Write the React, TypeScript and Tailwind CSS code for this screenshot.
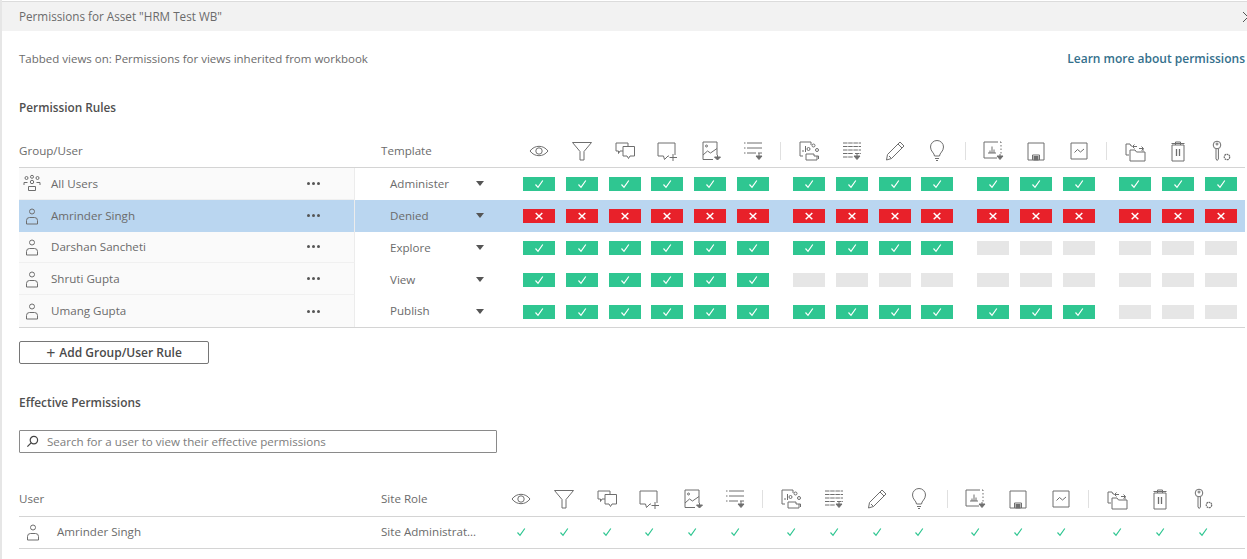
import React from "react";

const S = ({ children }: { children: React.ReactNode }) => (
  <svg viewBox="0 0 24 24" className="w-[24px] h-[24px] shrink-0" fill="none" stroke="#6e6e6e" strokeWidth="1">
    {children}
  </svg>
);

const icons: React.ReactNode[] = [
  <S key="eye"><path d="M3 12c2.500-3.200 5.600-4.700 9-4.700s6.500 1.500 9 4.700c-2.500 3.200-5.600 4.700-9 4.700S5.500 15.200 3 12z" /><circle cx="12" cy="12" r="3.200" /></S>,
  <S key="funnel"><path d="M2.500 3.500h19l-7.500 9v8.500h-4v-8.500z" /></S>,
  <S key="chat"><path d="M3 4h12v3M10 12H7l-1.500 2.500V12H3V4" /><path d="M10 7.500h11.500v9.500H17l-1.500 2.500-1.500-2.500h-4z" /></S>,
  <S key="chatplus"><path d="M3 4h17v12M14 17h-1l-3.500 3.500-1-3.500H3V4" /><path d="M18 15v7M14.500 18.500h7.500" /></S>,
  <S key="img"><path d="M15 20.500H5V3h14v13" /><path d="M5 16l4.500-4 3 2 6.500-4.500" /><circle cx="8.500" cy="7" r="1" /><path d="M19.500 16v2" /><path d="M16.500 18h6l-3 3z" fill="#6e6e6e" /></S>,
  <S key="list"><path d="M3 4h1.500M6 4h15M3 9h1.500M6 9h15M3 14h1.500M6 14h9M17 14h4" /><path d="M18 14v3" /><path d="M15 17h6l-3 3.500z" fill="#6e6e6e" /></S>,
  <S key="people"><path d="M14 3H3v14h3" /><path d="M14 3v3M6 13v-2M8.500 13V7" /><circle cx="11.500" cy="10" r="1.500" /><circle cx="16.500" cy="6.500" r="1.500" /><circle cx="20" cy="11" r="1.500" /><path d="M9 15h8v2h4.500v3M9 15v6h11v-4" /></S>,
  <S key="table"><path d="M3 4h18M3 7.500h18M3 11h18M3 14.500h10M15 14.500h6M3 18h10" strokeDasharray="4.500 .7" /><path d="M17 14v3" /><path d="M14 17h6l-3 3.500z" fill="#6e6e6e" /></S>,
  <S key="pencil"><path d="M4.500 15.500L17 3l4 4L8.500 19.500l-5 1.500zM15 5l4 4M6 17l2.500 2.500" /></S>,
  <S key="bulb"><path d="M9.500 17c0-3-4-4.500-4-9a6.500 6.500 0 0 1 13 0c0 4.500-4 6-4 9z" /><path d="M10 19.500h4M11 21.500h2" /></S>,
  <S key="chartdoc"><path d="M16 19H3V3h14M19 3h1v1M20 6v1.500M20 9.500v1.500M20 13v1.500" /><path d="M7 14h8M9 14v-2.500M11 14V7.500M13 14v-3.500" /><path d="M19 15v2" /><path d="M16 17h6l-3 3.500z" fill="#6e6e6e" /></S>,
  <S key="save"><path d="M4 4h16v17H4z" /><path d="M8.500 21v-5h7v5" /><rect x="10" y="17.500" width="4" height="3.500" fill="#6e6e6e" /></S>,
  <S key="line"><path d="M4 4h16v16H4z" /><path d="M7.500 13.500l3-3 3 2.500 3.500-3" /></S>,
  <S key="folders"><path d="M3 16V5h4l1 2h1M3 16h3" /><path d="M7 11h5l1.500 2H22v9H7z" /><path d="M10 7.500h4M11.500 5.500l-2 2 2 2M16 9.500h4v3M18.500 7.500l2 2-2 2" /></S>,
  <S key="trash"><path d="M6 6h12v16H6zM9.500 6V3h5v3M5.500 4.500h13" /><path d="M10.500 10v7M13.500 10v7" strokeWidth="1.300" /></S>,
  <S key="key"><circle cx="8" cy="6" r="3.800" /><path d="M7 9.800V20l1.200 1.500L9.400 20V9.800" /><circle cx="8" cy="5" r="1" /><circle cx="18" cy="18" r="2.700" strokeDasharray="1.800 .6" strokeWidth="1.300" /></S>,
];

const groups = [
  [0, 1, 2, 3, 4, 5],
  [6, 7, 8, 9],
  [10, 11, 12],
  [13, 14, 15],
];

const Check = ({ color = "#fff" }: { color?: string }) => (
  <svg viewBox="0 0 12 12" className="w-[12px] h-[12px]" fill="none" stroke={color} strokeWidth="1.200">
    <path d="M2.500 6.500l2.500 2.800L9.800 2.500" />
  </svg>
);

const Cross = () => (
  <svg viewBox="0 0 12 12" className="w-[12px] h-[12px]" fill="none" stroke="#fff" strokeWidth="1.500">
    <path d="M2.700 3l6.600 6.200M9.300 3L2.700 9.200" />
  </svg>
);

const Cell = ({ v }: { v: "y" | "n" | "e" }) => (
  <div
    className={`w-[32px] h-[14px] mt-[1px] flex items-center justify-center ${
      v === "y" ? "bg-[#2fc691]" : v === "n" ? "bg-[#e8212a]" : "bg-[#e6e6e6]"
    }`}
  >
    {v === "y" && <Check />}
    {v === "n" && <Cross />}
  </div>
);

const Grid = ({ render, seps }: { render: (i: number) => React.ReactNode; seps?: boolean }) => (
  <div className="flex items-center">
    {groups.map((g, gi) => (
      <React.Fragment key={gi}>
        {gi > 0 &&
          (seps ? (
            <div className="w-[24px] flex justify-center">
              <div className="w-px h-[18px] bg-[#e0e0e0]" />
            </div>
          ) : (
            <div className="w-[24px]" />
          ))}
        <div className="flex gap-[10.8px]">
          {g.map((i) => (
            <div key={i} className="w-[32px] flex justify-center">
              {render(i)}
            </div>
          ))}
        </div>
      </React.Fragment>
    ))}
  </div>
);

const User = () => (
  <svg viewBox="0 0 16 18" className="w-[16px] h-[18px] shrink-0" fill="none" stroke="#6e6e6e" strokeWidth="1">
    <circle cx="8" cy="4.500" r="2.500" />
    <path d="M2.500 17v-3.500A3 3 0 0 1 5.500 10.500h5a3 3 0 0 1 3 3V17z" />
  </svg>
);

const Users = () => (
  <svg viewBox="0 0 18 18" className="w-[18px] h-[18px] shrink-0" fill="none" stroke="#6e6e6e" strokeWidth="1">
    <circle cx="3.500" cy="4" r="1.500" />
    <circle cx="9" cy="2.800" r="1.500" />
    <circle cx="14.500" cy="4" r="1.500" />
    <circle cx="9" cy="8" r="1.700" />
    <path d="M1 11V8.500h3.500M17 11V8.500h-3.500M5.500 16.500V12.500h7v4z" />
  </svg>
);

const rows: { name: string; tpl: string; icon: "u" | "g"; cells: string; hi?: boolean; bg: string }[] = [
  { name: "All Users", tpl: "Administer", icon: "g", cells: "yyyyyyyyyyyyyyyy", bg: "bg-[#fafafa]" },
  { name: "Amrinder Singh", tpl: "Denied", icon: "u", cells: "nnnnnnnnnnnnnnnn", hi: true, bg: "" },
  { name: "Darshan Sancheti", tpl: "Explore", icon: "u", cells: "yyyyyyyyyyeeeeee", bg: "bg-[#fafafa]" },
  { name: "Shruti Gupta", tpl: "View", icon: "u", cells: "yyyyyyeeeeeeeeee", bg: "bg-[#fafafa]" },
  { name: "Umang Gupta", tpl: "Publish", icon: "u", cells: "yyyyyyyyyyyyyeee", bg: "bg-[#fafafa]" },
];

export default function App() {
  return (
    <div
      className="w-[1247px] h-[559px] overflow-hidden bg-white text-[#6b6b6b] text-[11.6px] border-l-2 border-[#e6e6e6] flex flex-col"
      style={{ fontFamily: '"Open Sans", sans-serif' }}
    >
      <div className="h-[2px] shrink-0 border-b border-[#dcdcdc] bg-white" />
      <div className="h-[29px] shrink-0 bg-[#f2f2f2] flex items-center justify-between pl-[17px] pr-0">
        <span className="text-[11.7px]">Permissions for Asset "HRM Test WB"</span>
        <svg viewBox="0 0 10 10" className="w-[10px] h-[10px] mr-[-6px]" fill="none" stroke="#555" strokeWidth="1">
          <path d="M0 0l10 10M10 0L0 10" />
        </svg>
      </div>

      <div className="pl-[17px] pr-[2px] flex flex-col">
        <div className="mt-[19px] h-[18px] flex items-center justify-between">
          <span className="text-[11.5px]">Tabbed views on: Permissions for views inherited from workbook</span>
          <span className="font-semibold text-[#34708c] text-[12px]">Learn more about permissions</span>
        </div>
        <div className="mt-[31px] h-[18px] flex items-center font-semibold text-[#4f4f4f] text-[11.8px]">Permission Rules</div>

        <div className="mt-[17px] h-[34px] flex items-center border-b border-[#d4d4d4]">
          <div className="w-[362px] shrink-0">Group/User</div>
          <div className="w-[142px] shrink-0">Template</div>
          <Grid seps render={(i) => icons[i]} />
        </div>

        <div className="h-[160px] flex flex-col border-b border-[#d4d4d4]">
          {rows.map((r) => (
            <div key={r.name} className={`flex-1 flex items-center ${r.hi ? "bg-[#bad6f0]" : ""}`}>
              <div className={`w-[336px] h-full shrink-0 flex items-center pl-[4px] pr-[34px] border-r border-[#ececec] ${r.bg} ${r.name !== "Umang Gupta" && !r.hi ? "border-b border-b-[#f0f0f0]" : ""}`}>
                <div className="w-[18px] flex justify-center">{r.icon === "g" ? <Users /> : <User />}</div>
                <span className="ml-[10px] flex-1">{r.name}</span>
                <div className="flex gap-[2px]">
                  <i className="w-[3px] h-[3px] rounded-full bg-[#555]" />
                  <i className="w-[3px] h-[3px] rounded-full bg-[#555]" />
                  <i className="w-[3px] h-[3px] rounded-full bg-[#555]" />
                </div>
              </div>
              <div className="w-[168px] shrink-0 pl-[35px] flex items-center">
                <span className="w-[86px]">{r.tpl}</span>
                <span className="w-0 h-0 border-l-[4px] border-r-[4px] border-t-[5px] border-l-transparent border-r-transparent border-t-[#555]" />
              </div>
              <Grid render={(i) => <Cell v={r.cells[i] as "y" | "n" | "e"} />} />
            </div>
          ))}
        </div>

        <button className="mt-[13px] w-[190px] h-[23px] shrink-0 border border-[#767676] rounded-[2px] flex items-center justify-center font-semibold text-[#4a4a4a] text-[12px]">
          <span className="font-normal text-[16px] leading-none mr-[4px]">+</span>Add Group/User Rule
        </button>

        <div className="mt-[30px] h-[18px] flex items-center font-semibold text-[#4f4f4f] text-[11.9px]">Effective Permissions</div>

        <div className="mt-[18px] w-[478px] h-[23px] shrink-0 border border-[#8a8a8a] rounded-[1px] flex items-center pl-[6px]">
          <svg viewBox="0 0 14 14" className="w-[13px] h-[13px]" fill="none" stroke="#444" strokeWidth="1.300">
            <circle cx="8.500" cy="5.500" r="4" />
            <path d="M5.500 8.500L1.500 12.500" />
          </svg>
          <span className="ml-[8px] text-[#7d7d7d]">Search for a user to view their effective permissions</span>
        </div>

        <div className="mt-[30px] h-[34px] flex items-center border-b border-[#d4d4d4] pb-[2px]">
          <div className="w-[362px] shrink-0">User</div>
          <div className="w-[124px] shrink-0">Site Role</div>
          <Grid seps render={(i) => icons[i]} />
        </div>
        <div className="h-[32px] flex items-center border-b border-[#d4d4d4] pb-[1px]">
          <div className="w-[362px] shrink-0 flex items-center pl-[6px]">
            <User />
            <span className="ml-[16px]">Amrinder Singh</span>
          </div>
          <div className="w-[124px] shrink-0 truncate pr-[18px]">Site Administrat...</div>
          <Grid render={() => <Check color="#2fc691" />} />
        </div>
      </div>
    </div>
  );
}
